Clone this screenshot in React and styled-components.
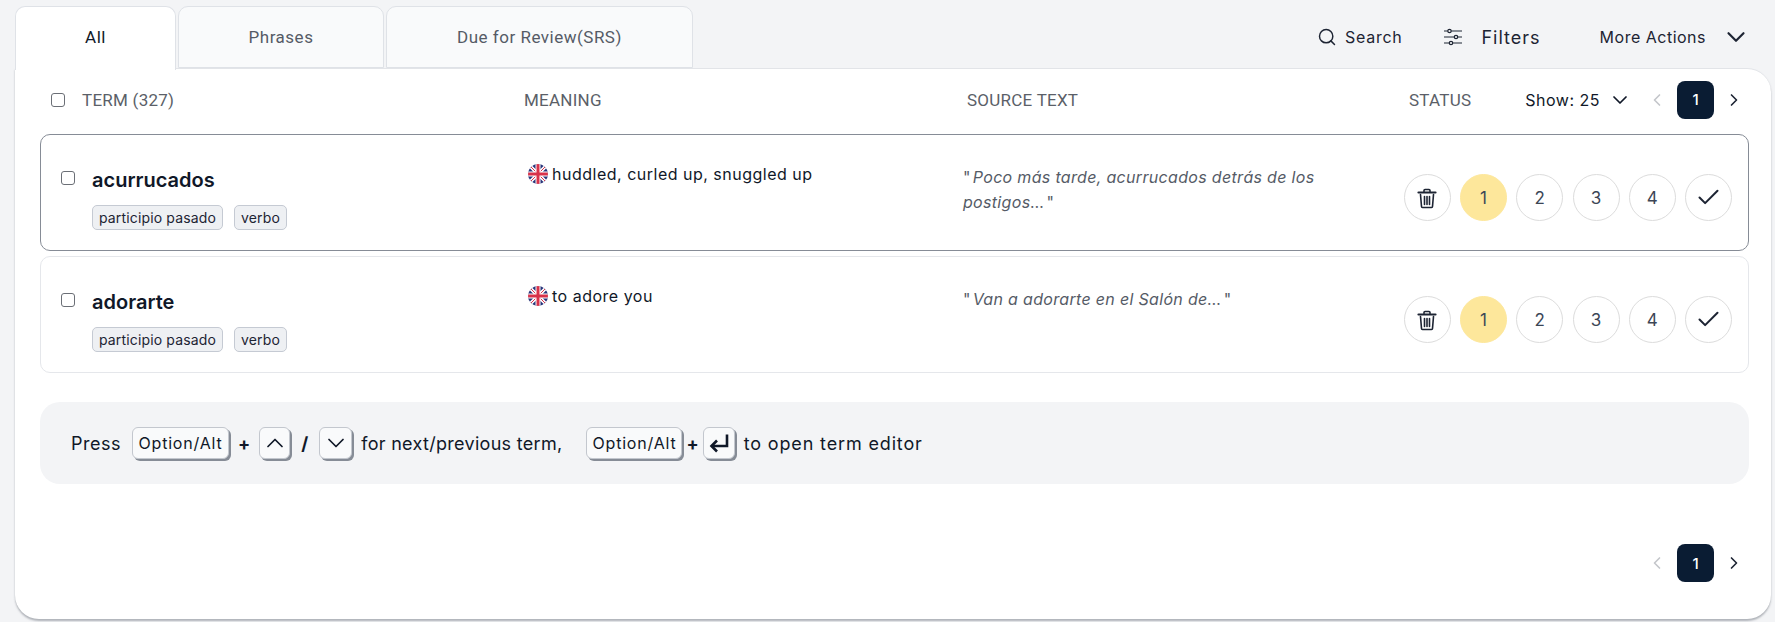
import React from "react";
import styled, { createGlobalStyle } from "styled-components";
import { Search, ChevronDown, ChevronUp, ChevronLeft, ChevronRight, Check } from "lucide-react";

const GlobalStyle = createGlobalStyle`
  html, body { margin: 0; height: 100%; background: #f3f4f6; }
  body { font-family: "Inter", "Liberation Sans", sans-serif; color: #101828; overflow: hidden; }
  * { box-sizing: border-box; }
`;

const Page = styled.div`
  width: 1775px;
  height: 622px;
  padding: 6px 4px 3px 15px;
  display: flex;
  flex-direction: column;
`;

const TopBar = styled.div`
  display: flex;
  justify-content: space-between;
  height: 62px;
  position: relative;
  z-index: 1;
`;

const Tabs = styled.div`
  display: flex;
  gap: 2px;
`;

const Tab = styled.div`
  width: ${(p) => p.$w}px;
  height: ${(p) => (p.$active ? 64 : 62)}px;
  display: flex;
  align-items: center;
  justify-content: center;
  padding-bottom: ${(p) => (p.$active ? 3 : 0)}px;
  border: 1px solid #dfe2e7;
  border-bottom: ${(p) => (p.$active ? "none" : "1px solid #dfe2e7")};
  border-radius: 10px 10px 0 0;
  background: ${(p) => (p.$active ? "#fff" : "#f9fafb")};
  color: ${(p) => (p.$active ? "#101828" : "#555b66")};
  font: 400 17px "Roboto", sans-serif;
  letter-spacing: 0.5px;
`;

const Actions = styled.div`
  display: flex;
  align-items: center;
  padding-right: 20px;
`;

const ActionItem = styled.div`
  display: flex;
  align-items: center;
  gap: ${(p) => p.$gap}px;
  margin-left: ${(p) => p.$ml || 0}px;
  font-size: ${(p) => p.$size}px;
  letter-spacing: ${(p) => p.$ls}px;
  color: #1d2433;
`;

const Panel = styled.div`
  flex: 1;
  background: #fff;
  border-top: 1px solid #e2e4e8;
  border-radius: 0 24px 24px 24px;
  box-shadow: 0 2px 2px rgba(120, 125, 135, 0.55);
  padding: 0 22px 0 25px;
  display: flex;
  flex-direction: column;
`;

const HeaderRow = styled.div`
  display: grid;
  grid-template-columns: 473px 443px 442px 1fr;
  height: 61px;
  align-items: center;
  margin-left: 11px;
`;

const HeadCell = styled.div`
  font: 400 17px "Roboto", sans-serif;
  letter-spacing: 0.25px;
  color: #5b5f68;
  display: flex;
  align-items: center;
`;

const Box = styled.span`
  width: 14px;
  height: 14px;
  border: 1px solid #6b6f76;
  border-radius: 3px;
  background: #fff;
  flex: none;
`;

const TermHead = styled(HeadCell)`
  gap: 17px;
`;

const StatusHead = styled(HeadCell)`
  justify-content: space-between;
  padding-right: 5px;
`;

const ShowPager = styled.div`
  display: flex;
  align-items: center;
  color: #101828;
`;

const ShowLabel = styled.div`
  display: flex;
  align-items: center;
  gap: 8px;
  margin-right: 15px;
  font: 400 16px "Inter", sans-serif;
  letter-spacing: 0.5px;
`;

const Pager = styled.div`
  display: flex;
  align-items: center;
  justify-content: flex-end;
  gap: 10px;
`;

const PageNum = styled.div`
  width: 37px;
  height: 38px;
  border-radius: 8px;
  background: #0a1c33;
  color: #fff;
  font: 500 15px "Inter", sans-serif;
  letter-spacing: 0;
  display: flex;
  align-items: center;
  justify-content: center;
`;

const Row = styled.div`
  display: grid;
  grid-template-columns: 467px 435px 1fr auto;
  height: 117px;
  margin-top: ${(p) => (p.$focus ? 4 : 5)}px;
  border: 1px solid ${(p) => (p.$focus ? "#868c96" : "#e5e7eb")};
  border-radius: 10px;
  padding: 30px 16px 0 20px;
`;

const TermCell = styled.div`
  display: grid;
  grid-template-columns: 14px auto;
  column-gap: 17px;
  align-content: start;
`;

const TermBox = styled(Box)`
  margin-top: 6px;
`;

const TermName = styled.div`
  font-size: 20px;
  font-weight: 600;
  line-height: 30px;
`;

const Tags = styled.div`
  grid-column: 2;
  display: flex;
  gap: 11px;
  margin-top: 10px;
`;

const Tag = styled.span`
  height: 25px;
  padding: 0 6px;
  font-size: 14px;
  letter-spacing: 0.15px;
  line-height: 23px;
  color: #1d2433;
  background: #eef0f3;
  border: 1px solid #c5cad3;
  border-radius: 5px;
`;

const Meaning = styled.div`
  font-size: 16px;
  letter-spacing: 0.5px;
  line-height: 24px;
  display: flex;
  gap: 4px;
  align-items: center;
  align-self: start;
  margin-top: -3px;
`;

const SourceText = styled.div`
  font-size: 16px;
  font-style: italic;
  letter-spacing: 0.32px;
  line-height: 25px;
  color: #555b66;
  width: 370px;
  &::before {
    content: '"';
    font-style: normal;
    margin-right: 2px;
  }
  &::after {
    content: '"';
    font-style: normal;
    margin-left: 2px;
  }
`;

const Status = styled.div`
  display: flex;
  gap: 9.25px;
  margin-top: 9px;
  align-self: start;
`;

const Circle = styled.div`
  width: 47px;
  height: 47px;
  border-radius: 50%;
  border: 1px solid ${(p) => (p.$on ? "#fde79b" : "#dcdcdc")};
  background: ${(p) => (p.$on ? "#fde79b" : "#fff")};
  color: #3c4656;
  font-size: 17px;
  display: flex;
  align-items: center;
  justify-content: center;
`;

const Notice = styled.div`
  height: 82px;
  margin-top: 29px;
  background: #f3f4f6;
  border-radius: 20px;
  padding-left: 31px;
  display: flex;
  align-items: center;
  font-size: 18px;
`;

const NoticeText = styled.span`
  letter-spacing: ${(p) => p.$ls}px;
  margin-left: ${(p) => p.$ml || 0}px;
`;

const Key = styled.kbd`
  font: 400 16px "Inter", sans-serif;
  letter-spacing: 0.8px;
  width: ${(p) => p.$w}px;
  height: 32px;
  margin-left: ${(p) => p.$ml || 0}px;
  background: #f9fafb;
  border: 1px solid #c3c7ce;
  border-radius: 6px;
  box-shadow: 2px 2px 0 #868c96;
  display: flex;
  align-items: center;
  justify-content: center;
  svg { flex: none; }
`;

const Strong = styled.b`
  font-weight: 700;
  margin: 0 ${(p) => p.$m}px;
`;

const Footer = styled.div`
  flex: 1;
  padding: 60px 5px 0 0;
`;

const Flag = () => (
  <svg width="20" height="20" viewBox="0 0 20 20">
    <defs>
      <clipPath id="flag-round"><circle cx="10" cy="10" r="10" /></clipPath>
    </defs>
    <g clipPath="url(#flag-round)">
      <rect width="20" height="20" fill="#28357a" />
      <path d="M0 0L20 20M20 0L0 20" stroke="#fff" strokeWidth="3.5" />
      <path d="M0 0L20 20M20 0L0 20" stroke="#d8324a" strokeWidth="1" />
      <path d="M10 0V20M0 10H20" stroke="#fff" strokeWidth="5" />
      <path d="M10 0V20M0 10H20" stroke="#d8324a" strokeWidth="3" />
    </g>
  </svg>
);

const TrashIcon = () => (
  <svg width="24" height="24" viewBox="0 0 24 24" fill="none" stroke="#1d2433" strokeWidth="1.6" strokeLinecap="round">
    <path d="M3.5 6.5h17" strokeWidth="2.2" />
    <path d="M9 5.5v-1a1 1 0 0 1 1-1h4a1 1 0 0 1 1 1v1" />
    <path d="M5.5 8.5l1 12a1 1 0 0 0 1 1h9a1 1 0 0 0 1-1l1-12" />
    <path d="M9.5 10.5v8M12 10.5v8M14.5 10.5v8" />
  </svg>
);

const FilterIcon = () => (
  <svg width="20" height="18" viewBox="0 0 20 18" fill="none" stroke="#1d2433" strokeWidth="1.2">
    <path d="M1 3h18M1 9h18M1 15h18" />
    <circle cx="6.5" cy="3" r="1.7" fill="#f3f4f6" />
    <circle cx="13" cy="9" r="1.7" fill="#f3f4f6" />
    <circle cx="8" cy="15" r="1.7" fill="#f3f4f6" />
  </svg>
);

const EnterIcon = () => (
  <svg width="24" height="24" viewBox="0 0 24 24" fill="none" stroke="#101828" strokeWidth="2.6">
    <path d="M20 3.5v11.5H4.5" />
    <path d="M10 9.5l-5.5 5.5 5.5 5.5" />
  </svg>
);

const PagerBlock = () => (
  <Pager>
    <ChevronLeft size={20} color="#c4c6ca" />
    <PageNum>1</PageNum>
    <ChevronRight size={20} color="#1d2433" />
  </Pager>
);

const terms = [
  {
    name: "acurrucados",
    meaning: "huddled, curled up, snuggled up",
    source: "Poco más tarde, acurrucados detrás de los postigos…",
    focus: true,
  },
  { name: "adorarte", meaning: "to adore you", source: "Van a adorarte en el Salón de…" },
];

const TermRow = ({ term }) => (
  <Row $focus={term.focus}>
    <TermCell>
      <TermBox />
      <TermName>{term.name}</TermName>
      <Tags>
        <Tag>participio pasado</Tag>
        <Tag>verbo</Tag>
      </Tags>
    </TermCell>
    <Meaning>
      <Flag />
      {term.meaning}
    </Meaning>
    <SourceText>{term.source}</SourceText>
    <Status>
      <Circle><TrashIcon /></Circle>
      <Circle $on>1</Circle>
      <Circle>2</Circle>
      <Circle>3</Circle>
      <Circle>4</Circle>
      <Circle><Check size={27} strokeWidth={1.8} color="#1d2433" /></Circle>
    </Status>
  </Row>
);

export default function App() {
  return (
    <Page>
      <GlobalStyle />
      <TopBar>
        <Tabs>
          <Tab $active $w={161}>All</Tab>
          <Tab $w={206}>Phrases</Tab>
          <Tab $w={307}>Due for Review(SRS)</Tab>
        </Tabs>
        <Actions>
          <ActionItem $gap={8} $size={16} $ls={0.75}>
            <Search size={20} strokeWidth={1.75} />
            Search
          </ActionItem>
          <ActionItem $gap={18} $ml={41} $size={18} $ls={1}>
            <FilterIcon />
            Filters
          </ActionItem>
          <ActionItem $gap={15} $ml={59} $size={16} $ls={0.5}>
            More Actions
            <ChevronDown size={30} strokeWidth={1.75} />
          </ActionItem>
        </Actions>
      </TopBar>
      <Panel>
        <HeaderRow>
          <TermHead>
            <Box />
            TERM (327)
          </TermHead>
          <HeadCell>MEANING</HeadCell>
          <HeadCell>SOURCE TEXT</HeadCell>
          <StatusHead>
            STATUS
            <ShowPager>
              <ShowLabel>
                Show: 25
                <ChevronDown size={24} strokeWidth={1.75} />
              </ShowLabel>
              <PagerBlock />
            </ShowPager>
          </StatusHead>
        </HeaderRow>
        {terms.map((t) => (
          <TermRow key={t.name} term={t} />
        ))}
        <Notice>
          <NoticeText $ls={0.5}>Press</NoticeText>
          <Key $w={97} $ml={11}>Option/Alt</Key>
          <Strong $m={9}>+</Strong>
          <Key $w={31}><ChevronUp size={28} strokeWidth={1.5} /></Key>
          <Strong $m={11}>/</Strong>
          <Key $w={33}><ChevronDown size={28} strokeWidth={1.5} /></Key>
          <NoticeText $ls={0.3} $ml={9}>for next/previous term,</NoticeText>
          <Key $w={96} $ml={24}>Option/Alt</Key>
          <Strong $m={4}>+</Strong>
          <Key $w={32}><EnterIcon /></Key>
          <NoticeText $ls={0.85} $ml={9}>to open term editor</NoticeText>
        </Notice>
        <Footer>
          <PagerBlock />
        </Footer>
      </Panel>
    </Page>
  );
}
